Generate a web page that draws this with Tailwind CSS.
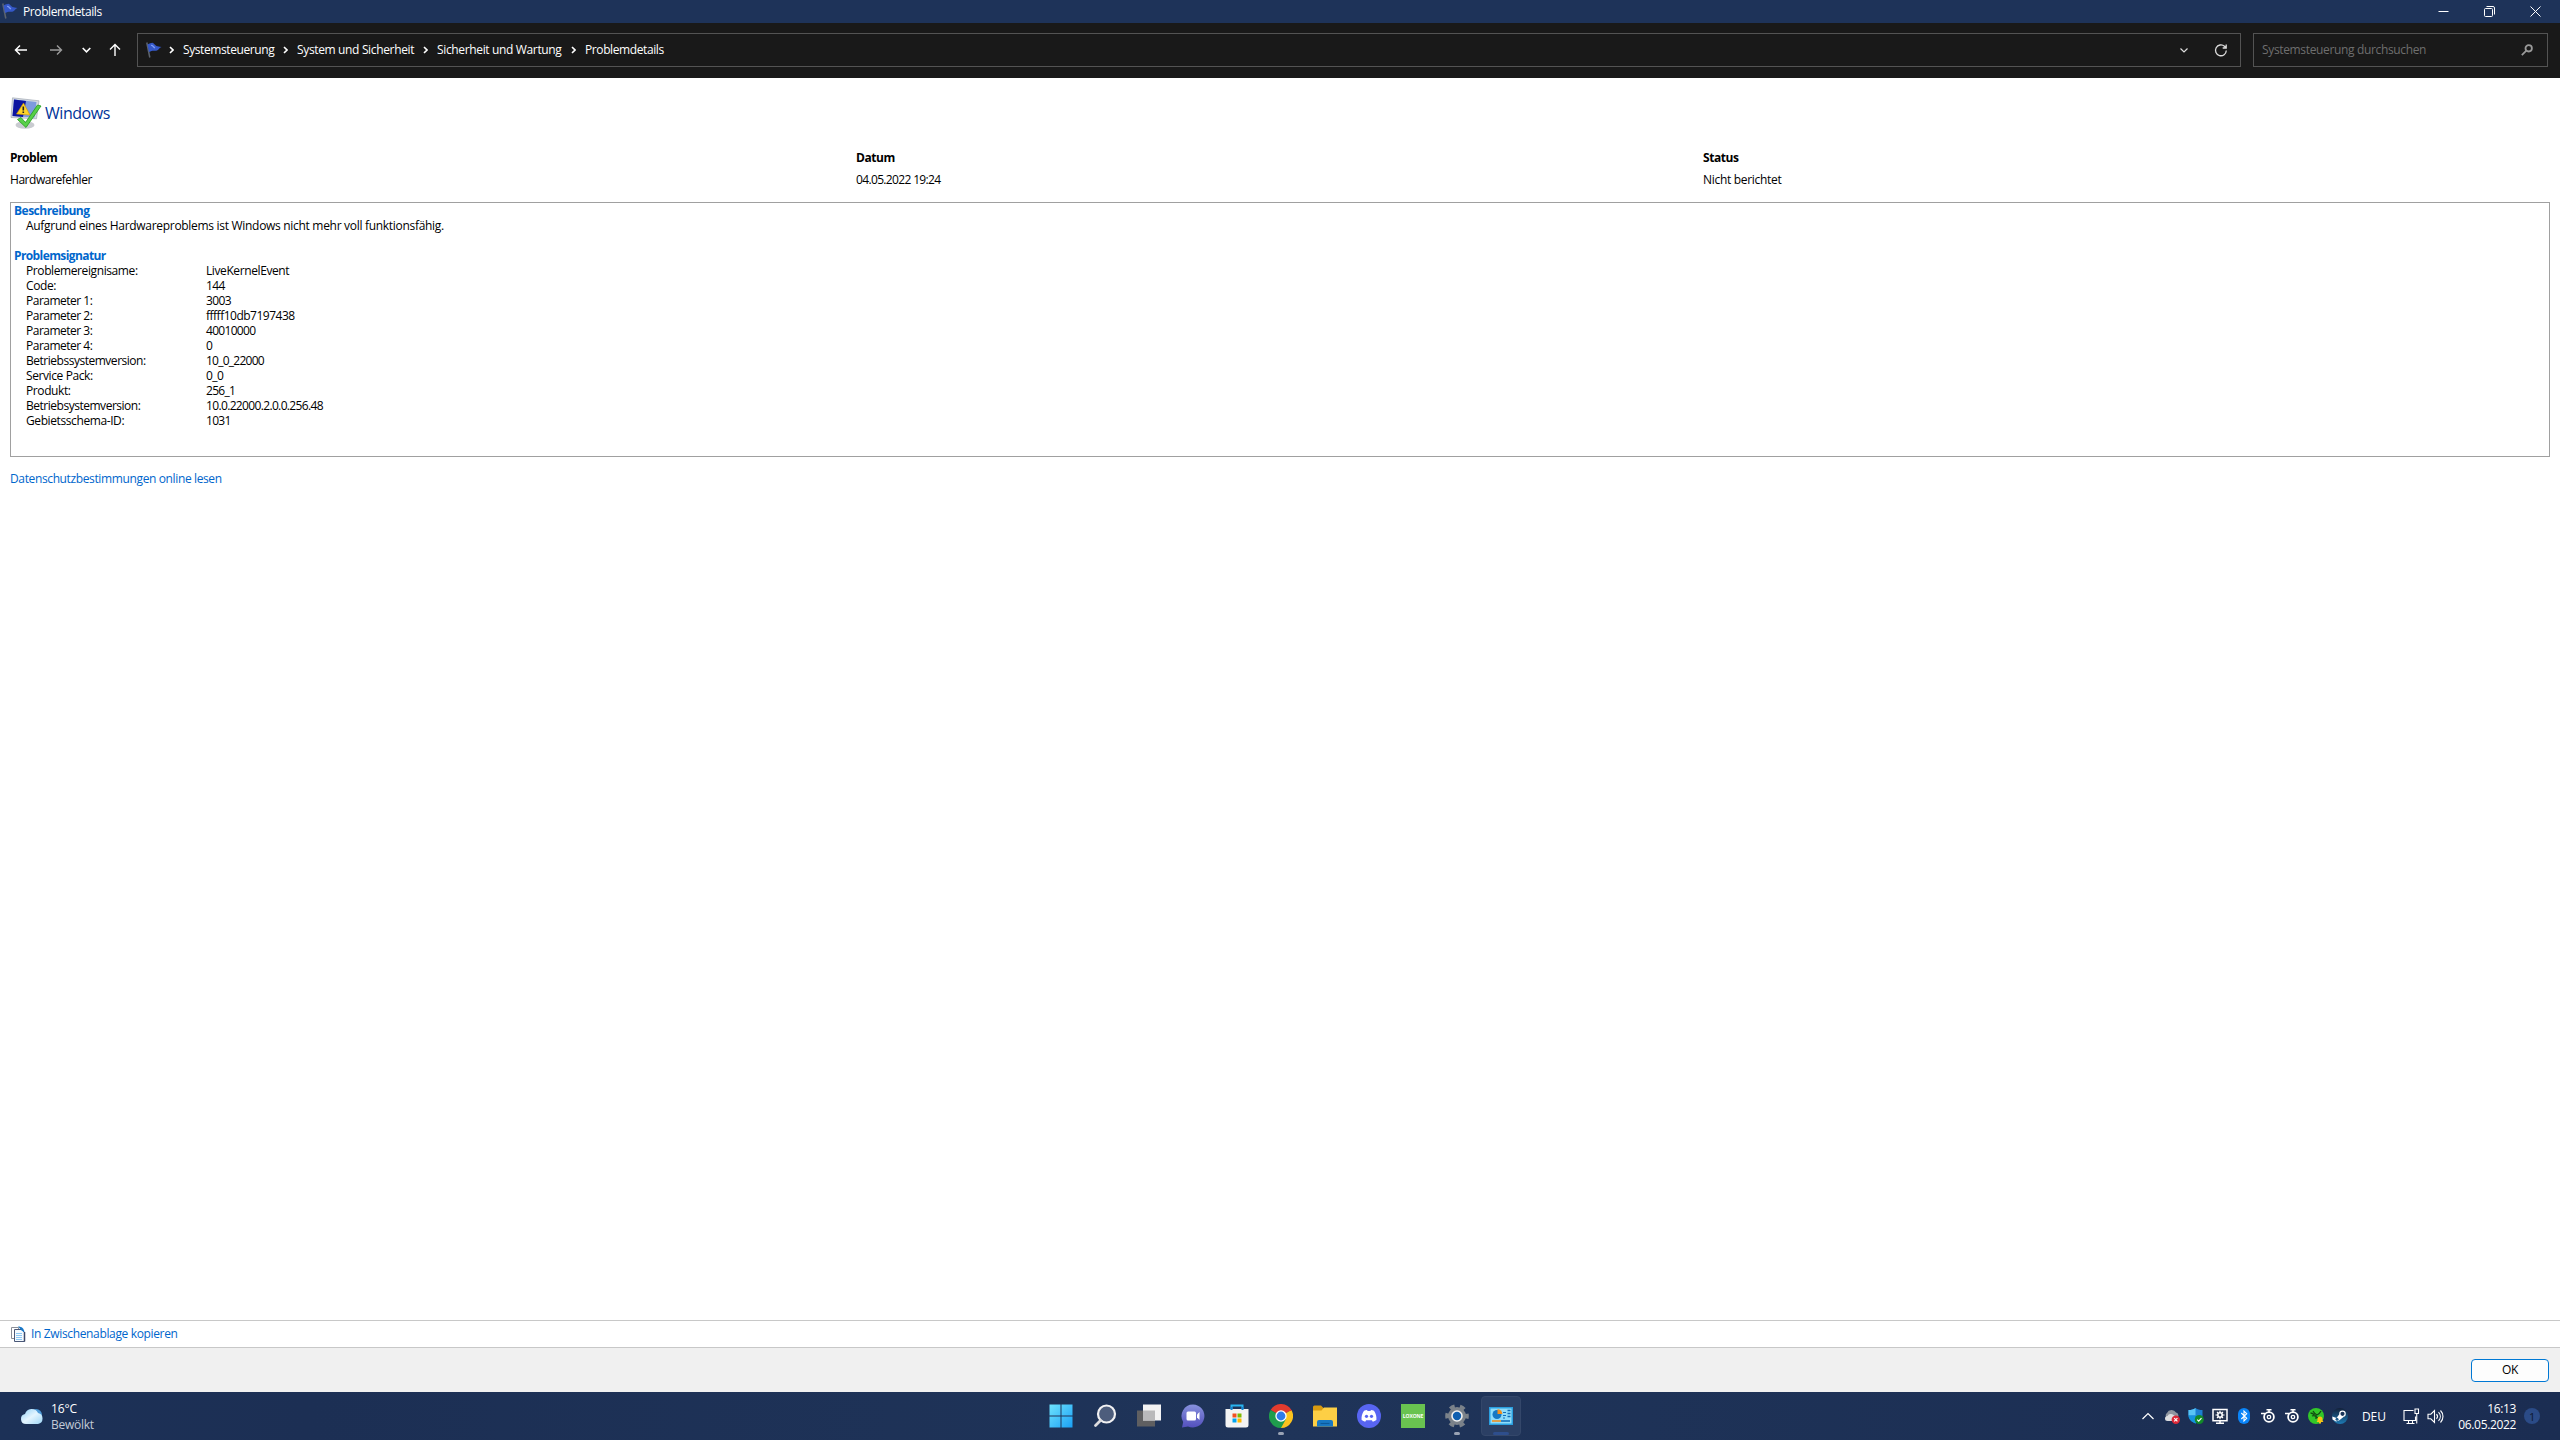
<!DOCTYPE html>
<html lang="de">
<head>
  <meta charset="UTF-8">
  <meta name="viewport" content="width=device-width, initial-scale=1.0">
  <title>Problemdetails</title>

  <!-- Tailwind CSS for styling -->
  <script src="https://cdn.jsdelivr.net/npm/@tailwindcss/browser@4"></script>
</head>
<body class="bg-white">

  <div class="flex h-[1440px] w-[2560px] flex-col overflow-hidden font-['Open_Sans','Noto_Sans',sans-serif] text-xs leading-[15px] tracking-[-0.4px] text-black">

    <!-- Title bar -->
    <header class="flex h-[23px] items-center bg-[#1e3359] pb-px text-white">
      <svg class="ml-0.5 size-4" viewBox="0 0 16 16">
        <path d="M.8.5l3 15" stroke="#5d646e" stroke-width="1.5" />
        <path d="M1.500 2.500C3.500 1 5 1.500 6.500.800c2 .6 2.500 2.700 4 3.200 1.500.6 2.500.5 5 1-2.500.8-2.500 2.500-4.500 3.500-2.500.8-4-.8-8 1.500z" fill="#3558c8" />
        <path d="M5 3.500c2-.5 2 1.500 4 2.500" fill="none" stroke="#7c9af5" stroke-width="1.200" />
      </svg>
      <span class="ml-[5px]">Problemdetails</span>
      <div class="ml-auto flex items-center gap-[35px] pr-[19px]">
        <svg class="size-[11px]" viewBox="0 0 11 11"><path d="M.5 5.500h10" stroke="#fff" /></svg>
        <svg class="size-[11px]" viewBox="0 0 11 11" fill="none" stroke="#fff">
          <rect x=".5" y="2.5" width="8" height="8" rx="1" />
          <path d="M2.5.5H9a1.5 1.5 0 0 1 1.5 1.5v6.500" />
        </svg>
        <svg class="size-[11px]" viewBox="0 0 11 11"><path d="M.5.5l10 10M10.500.5l-10 10" stroke="#fff" /></svg>
      </div>
    </header>

    <!-- Navigation -->
    <nav class="flex h-[55px] items-center bg-[#191919] pb-px text-white">
      <svg class="ml-[14px] size-[14px]" viewBox="0 0 14 14" fill="none" stroke="#fff" stroke-width="1.5"><path d="M13 7H1.500M6 2.500L1.500 7 6 11.500" /></svg>
      <svg class="ml-[21px] size-[14px]" viewBox="0 0 14 14" fill="none" stroke="#9a9a9a" stroke-width="1.4"><path d="M1 7h11.500M8 2.500L12.500 7 8 11.500" /></svg>
      <svg class="ml-[19px] h-[14px] w-[9px]" viewBox="0 0 9 14" fill="none" stroke="#fff" stroke-width="1.6"><path d="M.7 5l3.800 3.800L8.300 5" /></svg>
      <svg class="ml-[17px] size-[14px]" viewBox="0 0 14 14" fill="none" stroke="#fff" stroke-width="1.4"><path d="M7 13V1.500M2 6.500l5-5 5 5" /></svg>

      <div class="ml-[15px] flex h-[34px] w-[2104px] items-center border border-[#535353]">
        <svg class="ml-2 size-4" viewBox="0 0 16 16">
          <path d="M.8.5l3 15" stroke="#5d646e" stroke-width="1.5" />
          <path d="M1.500 2.500C3.500 1 5 1.500 6.500.800c2 .6 2.500 2.700 4 3.200 1.500.6 2.500.5 5 1-2.500.8-2.500 2.500-4.500 3.500-2.500.8-4-.8-8 1.500z" fill="#3558c8" />
          <path d="M5 3.500c2-.5 2 1.500 4 2.500" fill="none" stroke="#7c9af5" stroke-width="1.200" />
        </svg>
        <svg class="ml-[7px] h-2 w-[5px]" viewBox="0 0 5 8" fill="none" stroke="#fff" stroke-width="1.6"><path d="M1 1l3 3-3 3" /></svg>
        <span class="ml-[9px] w-[92px] pb-px">Systemsteuerung</span>
        <svg class="ml-2 h-2 w-[5px]" viewBox="0 0 5 8" fill="none" stroke="#fff" stroke-width="1.6"><path d="M1 1l3 3-3 3" /></svg>
        <span class="ml-[9px] w-[118px] pb-px tracking-[-0.35px]">System und Sicherheit</span>
        <svg class="ml-2 h-2 w-[5px]" viewBox="0 0 5 8" fill="none" stroke="#fff" stroke-width="1.6"><path d="M1 1l3 3-3 3" /></svg>
        <span class="ml-[9px] w-[126px] pb-px tracking-[-0.35px]">Sicherheit und Wartung</span>
        <svg class="ml-2 h-2 w-[5px]" viewBox="0 0 5 8" fill="none" stroke="#fff" stroke-width="1.6"><path d="M1 1l3 3-3 3" /></svg>
        <span class="ml-[9px] pb-px">Problemdetails</span>
        <svg class="ml-auto h-[14px] w-2" viewBox="0 0 8 14" fill="none" stroke="#ddd" stroke-width="1.2"><path d="M.5 5.500L4 9l3.500-3.500" /></svg>
        <svg class="ml-[26px] mr-[12px] size-[14px]" viewBox="0 0 14 14" fill="none" stroke="#ddd" stroke-width="1.3"><path d="M12.300 7.500A5.400 5.400 0 1 1 10.500 3.300L12 4.800M12.200 1.500v3.500H8.700" /></svg>
      </div>

      <div class="ml-3 flex h-[34px] w-[295px] items-center border border-[#535353] pl-2 text-[#6e6e6e]">
        <span class="pb-px tracking-[-0.35px]">Systemsteuerung durchsuchen</span>
        <svg class="ml-auto mr-[14px] size-3" viewBox="0 0 12 12" fill="none" stroke="#999" stroke-width="1.8"><circle cx="7.700" cy="4.300" r="3.200" /><path d="M5.300 6.700L.8 11.200" /></svg>
      </div>
    </nav>

    <main class="flex grow flex-col">
      <!-- Heading -->
      <div class="mt-[19px] flex items-center pl-[10px]">
        <svg class="size-8" viewBox="0 0 32 32">
          <ellipse cx="15" cy="28" rx="9.500" ry="3.800" fill="#c9cbd0" />
          <path d="M2.500.8l26.500 3-2.500 18L1 20.500z" fill="#d5dae2" stroke="#98a1ad" stroke-width=".6" />
          <path d="M4 2.500l22.500 2.600-2 15.400L2.500 19z" fill="#7d9bdf" />
          <path d="M4 2.500l12 1.400-3 16L2.500 19z" fill="#0c14a0" />
          <path d="M13.500 6l6.500 12-13.500-1z" fill="#ffd428" stroke="#c99500" stroke-width=".6" />
          <path d="M13.300 9.500v4M13.300 14.500V16" stroke="#222" stroke-width="1.600" />
          <path d="M7.500 22.500l3.500-2 4.500 5L27.500 8l3.500 1L16 30.500z" fill="#58d048" stroke="#229a1c" stroke-width=".8" />
        </svg>
        <h1 class="ml-[3px] text-base leading-5 tracking-[-0.45px] text-[#003399]">Windows</h1>
      </div>

      <div class="mt-[21px] grid grid-cols-[846px_847px_1fr] gap-y-[7px] pl-[10px]">
        <span class="font-bold tracking-[-0.45px]">Problem</span>
        <span class="font-bold tracking-[-0.45px]">Datum</span>
        <span class="font-bold tracking-[-0.45px]">Status</span>
        <span class="tracking-[-0.45px]">Hardwarefehler</span>
        <span class="tracking-[-0.65px]">04.05.2022 19:24</span>
        <span class="tracking-[-0.3px]">Nicht berichtet</span>
      </div>

      <!-- Report -->
      <section class="mx-[10px] mt-[15px] h-[255px] border border-[#a0a0a0] pl-[3px]">
        <h2 class="font-bold tracking-[-0.5px] text-[#0066cc]">Beschreibung</h2>
        <p class="pl-3 tracking-[-0.3px]">Aufgrund eines Hardwareproblems ist Windows nicht mehr voll funktionsfähig.</p>
        <h2 class="mt-[15px] font-bold tracking-[-0.6px] text-[#0066cc]">Problemsignatur</h2>
        <dl class="grid grid-cols-[180px_1fr] pl-3">
          <dt>Problemereignisame:</dt><dd>LiveKernelEvent</dd>
          <dt>Code:</dt><dd class="tracking-[-0.6px]">144</dd>
          <dt class="tracking-[-0.5px]">Parameter 1:</dt><dd class="tracking-[-0.6px]">3003</dd>
          <dt class="tracking-[-0.5px]">Parameter 2:</dt><dd class="tracking-[-0.5px]">fffff10db7197438</dd>
          <dt class="tracking-[-0.5px]">Parameter 3:</dt><dd class="tracking-[-0.7px]">40010000</dd>
          <dt class="tracking-[-0.5px]">Parameter 4:</dt><dd class="tracking-[-0.6px]">0</dd>
          <dt class="tracking-[-0.48px]">Betriebssystemversion:</dt><dd class="tracking-[-0.75px]">10_0_22000</dd>
          <dt>Service Pack:</dt><dd class="tracking-[-0.6px]">0_0</dd>
          <dt>Produkt:</dt><dd class="tracking-[-0.7px]">256_1</dd>
          <dt class="tracking-[-0.48px]">Betriebsystemversion:</dt><dd class="tracking-[-0.65px]">10.0.22000.2.0.0.256.48</dd>
          <dt>Gebietsschema-ID:</dt><dd class="tracking-[-0.7px]">1031</dd>
        </dl>
      </section>
      <a class="mt-[14px] pl-[10px] tracking-[-0.37px] text-[#0066cc]">Datenschutzbestimmungen online lesen</a>

      <div class="mt-auto flex h-[27px] items-center border-t border-[#c8c8c8] pl-[10px] text-[#0066cc]">
        <svg class="size-4" viewBox="0 0 16 16">
          <path d="M1.500 1.500h7v11h-7z" fill="#fff" stroke="#8b8f99" />
          <path d="M4.500 3.500h7l3 3v9h-10z" fill="#f4faff" stroke="#4a5878" />
          <path d="M8 .5c4 0 6 2 6.500 6l-3-2z" fill="#1878c8" />
          <path d="M6 7.500h6M6 9.500h6M6 11.500h6M6 13.500h6" stroke="#8cc8f4" />
          <path d="M14.500 6v9.500" stroke="#3c4868" stroke-width="1.500" />
        </svg>
        <span class="ml-[5px] pb-px tracking-[-0.35px]">In Zwischenablage kopieren</span>
      </div>
    </main>

    <!-- Dialog buttons -->
    <div class="flex h-[45px] shrink-0 items-center justify-end border-t border-[#c8c8c8] bg-[#f0f0f0] pr-[11px]">
      <button class="h-[23px] w-[78px] rounded border border-[#0078d4] bg-[#fdfdfd] pb-px">OK</button>
    </div>

    <!-- Taskbar -->
    <footer class="grid h-12 shrink-0 grid-cols-[1038px_1fr_1038px] items-center bg-[linear-gradient(90deg,#1c3157,#1c2f54_12%,#1f3459_50%,#1b2d52)] tracking-[-0.1px] text-white">
      <div class="flex items-center pl-5">
        <svg class="h-[18px] w-6" viewBox="0 0 24 18">
          <defs>
            <linearGradient id="cloud" x1="0" y1="0" x2="1" y2="1"><stop offset="0" stop-color="#8fd0f7" /><stop offset=".5" stop-color="#e4f5ff" /><stop offset="1" stop-color="#9dd5f5" /></linearGradient>
          </defs>
          <circle cx="16" cy="8" r="6" fill="#4f9bd8" />
          <path d="M6 17a5 5 0 0 1-1-9.900A7 7 0 0 1 18 6a5.600 5.600 0 0 1 0 11z" fill="url(#cloud)" />
        </svg>
        <div class="ml-[7px] pt-0.5 leading-4">
          <div>16°C</div>
          <div class="tracking-[-0.25px] text-[#c3cad6]">Bewölkt</div>
        </div>
      </div>

      <div class="flex items-center pl-px">
        <div class="flex h-10 w-11 items-center justify-center">
          <svg class="size-6" viewBox="0 0 24 24">
            <defs><linearGradient id="win" x1="0" y1="0" x2="1" y2="1"><stop offset="0" stop-color="#6fe3fd" /><stop offset="1" stop-color="#1aa0f5" /></linearGradient></defs>
            <path d="M.5.500h11v11H.5zM12.500.500h11v11h-11zM.5 12.500h11v11H.5zM12.500 12.500h11v11h-11z" fill="url(#win)" />
          </svg>
        </div>
        <div class="flex h-10 w-11 items-center justify-center">
          <svg class="size-6" viewBox="0 0 24 24"><circle cx="13.500" cy="10" r="8.500" fill="#4d5d7c" stroke="#f0f0f2" stroke-width="2.200" /><path d="M7.500 16.500l-5 5" stroke="#dcdcde" stroke-width="2.800" stroke-linecap="round" /></svg>
        </div>
        <div class="flex h-10 w-11 items-center justify-center">
          <svg class="size-6" viewBox="0 0 24 24"><path d="M0 6.500h18v16H0z" fill="#5f5f61" /><path d="M6 .5h18v16H6z" fill="#f3f3f4" /><path d="M6 6.500h12v10H6z" fill="#b9b9bb" /></svg>
        </div>
        <div class="flex h-10 w-11 items-center justify-center">
          <svg class="size-6" viewBox="0 0 24 24">
            <defs><linearGradient id="chat" x1="0" y1="0" x2="0" y2="1"><stop offset="0" stop-color="#8791dd" /><stop offset="1" stop-color="#5350bd" /></linearGradient></defs>
            <path d="M12 .5a11.500 11.500 0 1 1-5 21.900L1 23.500l1.200-5.500A11.500 11.500 0 0 1 12 .5z" fill="url(#chat)" />
            <rect x="5.500" y="7.500" width="9.500" height="9" rx="1.500" fill="#fff" /><path d="M16 10.500l2.500-2.500v8L16 13.500z" fill="#fff" />
          </svg>
        </div>
        <div class="flex h-10 w-11 items-center justify-center">
          <svg class="size-6" viewBox="0 0 24 24">
            <path d="M6.500 5V1.500h11V5" fill="none" stroke="#28b4f0" stroke-width="2" />
            <path d="M.5 5h23v16a2.500 2.500 0 0 1-2.500 2.500H3A2.500 2.500 0 0 1 .5 21z" fill="#f3f3f3" />
            <path d="M7.500 9.500h4v4h-4z" fill="#f25022" /><path d="M12.500 9.500h4v4h-4z" fill="#7fba00" /><path d="M7.500 14.500h4v4h-4z" fill="#00a4ef" /><path d="M12.500 14.500h4v4h-4z" fill="#ffb900" />
            <path d="M6.500 6V3M17.500 6V3" stroke="#1683d0" stroke-width="2" />
          </svg>
        </div>
        <div class="relative flex h-10 w-11 items-center justify-center">
          <svg class="size-6" viewBox="0 0 24 24">
            <path d="M12 12L1.600 6A12 12 0 0 1 22.400 6z" fill="#e33b2e" />
            <path d="M12 12L22.400 6A12 12 0 0 1 12 24z" fill="#fcc31e" />
            <path d="M12 12l5 3-5 9A12 12 0 0 1 1.600 6z" fill="#1f9d4d" />
            <path d="M12 6h10.400v1H12z" fill="#e33b2e" />
            <circle cx="12" cy="12" r="5.700" fill="#fff" /><circle cx="12" cy="12" r="4.400" fill="#2f7bea" />
          </svg>
          <span class="absolute bottom-[1px] h-[3px] w-1.5 rounded-full bg-[#9aa3b4]"></span>
        </div>
        <div class="flex h-10 w-11 items-center justify-center">
          <svg class="size-6" viewBox="0 0 24 24">
            <path d="M0 3a1.500 1.500 0 0 1 1.500-1.500H8l3 3V8H0z" fill="#d89a10" />
            <path d="M0 6.500h8.500l2.500-3h13v19H0z" fill="#fdcf45" />
            <path d="M4 22.500V18a2 2 0 0 1 2-2h12a2 2 0 0 1 2 2v4.500z" fill="#1878c4" /><path d="M7.500 19.500h9" stroke="#0c5a9c" stroke-width="1.200" />
          </svg>
        </div>
        <div class="flex h-10 w-11 items-center justify-center">
          <svg class="size-6" viewBox="0 0 24 24">
            <circle cx="12" cy="12" r="12" fill="#5865f2" />
            <path d="M7 6.800c1-.5 2-.8 3-.9l.6 1.100h2.800l.6-1.100c1 .1 2 .4 3 .9 2 2.900 2.700 6 2.400 9.200-1.200.9-2.400 1.400-3.600 1.700l-.9-1.500H9.100l-.9 1.500c-1.200-.3-2.400-.8-3.600-1.700C4.300 12.800 5 9.700 7 6.800z" fill="#fff" />
            <circle cx="9.500" cy="12.300" r="1.600" fill="#5865f2" /><circle cx="14.500" cy="12.300" r="1.600" fill="#5865f2" />
          </svg>
        </div>
        <div class="flex h-10 w-11 items-center justify-center">
          <div class="flex size-6 items-center justify-center bg-[#69c350] text-[5px] font-bold leading-none tracking-[-0.1px]">LOXONE</div>
        </div>
        <div class="relative flex h-10 w-11 items-center justify-center">
          <svg class="size-6" viewBox="0 0 24 24">
            <circle cx="12" cy="12" r="9" fill="#7b828a" />
            <circle cx="12" cy="12" r="9.800" fill="none" stroke="#7b828a" stroke-width="4" stroke-dasharray="5 5.263" stroke-dashoffset="2.500" />
            <circle cx="12" cy="12" r="5" fill="#0f5fb0" stroke="#f0f0f0" stroke-width="1.600" />
          </svg>
          <span class="absolute bottom-[1px] h-[3px] w-1.5 rounded-full bg-[#9aa3b4]"></span>
        </div>
        <div class="relative mx-0.5 flex size-10 items-center justify-center rounded border border-[#34476a] bg-[#2b3f64]">
          <svg class="size-6" viewBox="0 0 24 24">
            <path d="M0 3h24v18H0z" fill="#2a9fe0" /><path d="M1.500 4.500h21v15h-21z" fill="#8fdcfa" />
            <circle cx="8" cy="10.500" r="4.500" fill="#1578c4" /><path d="M8.500 10V5.200a4.800 4.800 0 0 1 4.800 4.800z" fill="#f09020" />
            <path d="M14 8.500h3M14 11.500h3M14 14h2" stroke="#1470b8" /><path d="M18.500 6.500h3M18.500 9.500h3M18.500 12.500h3" stroke="#1470b8" stroke-width="1.500" />
            <path d="M3 17h9" stroke="#f09020" stroke-width="1.600" /><path d="M12 17h9" stroke="#1470b8" stroke-width="1.600" />
          </svg>
          <span class="absolute bottom-0 h-[3px] w-4 rounded-full bg-[#2e4e8c]"></span>
        </div>
      </div>

      <!-- Tray -->
      <div class="flex items-center justify-end pr-[21px]">
        <div class="flex items-center gap-2">
          <svg class="size-4" viewBox="0 0 16 16" fill="none" stroke="#fff" stroke-width="1.200"><path d="M2.500 11L8 5.500l5.500 5.500" /></svg>
          <svg class="size-4" viewBox="0 0 16 16">
            <path d="M3 10a3 3 0 0 1 0-5A5 5 0 0 1 12 4.500 3 3 0 0 1 13 10z" fill="#8f959f" /><path d="M3.500 13a2.500 2.500 0 0 1 0-5 4 4 0 0 1 6-1l3 2v4z" fill="#dcdde0" />
            <circle cx="11.800" cy="11.800" r="4.200" fill="#dc2838" /><path d="M10.200 10.200l3.200 3.200M13.400 10.200l-3.200 3.200" stroke="#fff" stroke-width="1.200" />
          </svg>
          <svg class="size-4" viewBox="0 0 16 16">
            <path d="M7.500 0c2 1.500 4 2 7 2v5c0 4-3 7-7 8.500C3.500 14 .5 11 .5 7V2c3 0 5-.5 7-2z" fill="#1c7fd0" /><path d="M7.500 0v7.500h-7V2c3 0 5-.5 7-2z" fill="#58c4f4" /><path d="M7.500 7.500v8C3.500 14 .5 11 .5 7.500z" fill="#1494dc" />
            <circle cx="11.300" cy="11.500" r="4.500" fill="#128a28" /><path d="M9.200 11.600l1.500 1.500 2.800-3" fill="none" stroke="#fff" stroke-width="1.200" />
          </svg>
          <svg class="size-4" viewBox="0 0 16 16" fill="none" stroke="#fff">
            <path d="M1 1.500h14v11.300H1z" fill="#26344f" stroke-width="1.500" /><path d="M4 15.200h8M8 13v2" stroke-width="1.500" /><circle cx="8" cy="7" r="2.200" stroke-width="1.600" /><path d="M8 2.800v1.700M8 9.500v1.700M3.500 7h2M10.500 7h2M5 4l1.200 1.200M11 4L9.800 5.200M5 10l1.200-1.200M11 10L9.800 8.800" stroke-width="1.200" />
          </svg>
          <svg class="size-4" viewBox="0 0 16 16"><rect x="2" width="12" height="16" rx="6" fill="#0a84f8" /><path d="M5.300 5l5.400 5.300L8 13V3l2.700 2.700L5.300 11" fill="none" stroke="#fff" stroke-width="1.100" /></svg>
          <svg class="size-4" viewBox="0 0 16 16" fill="none" stroke="#fff"><circle cx="9" cy="9" r="4.900" stroke-width="1.800" /><circle cx="9" cy="9" r="1.700" stroke-width="1.300" /><path d="M1 5.500h4M6.500 1.700h5M9 2v2" stroke-width="1.500" /></svg>
          <svg class="size-4" viewBox="0 0 16 16" fill="none" stroke="#fff"><circle cx="9" cy="9" r="4.900" stroke-width="1.800" /><circle cx="9" cy="9" r="1.700" stroke-width="1.300" /><path d="M1 5.500h4M6.500 1.700h5M9 2v2" stroke-width="1.500" /></svg>
          <svg class="size-4" viewBox="0 0 16 16">
            <circle cx="8" cy="8" r="8" fill="#32c828" /><path d="M2.500 5c2 0 3 1 4 2M5 3c1 2 2 3 4 4M13 3c-1 2-2 3-4 4M4 8c2-1 4 0 6 2M8 7v4" fill="none" stroke="#124c12" stroke-width="1.300" />
            <path d="M8.500 14c1-1 1-1.500 1-3a2.500 2.500 0 0 1 5 0c0 1.500 0 2 1 3zM11 14h2v1.500h-2z" fill="#f8c414" />
          </svg>
          <svg class="size-4" viewBox="0 0 16 16">
            <defs><linearGradient id="steam" x1="0" y1="0" x2="0" y2="1"><stop offset="0" stop-color="#132039" /><stop offset="1" stop-color="#1d7ab4" /></linearGradient></defs>
            <circle cx="8" cy="8" r="8" fill="url(#steam)" /><path d="M.3 8.500l4.200 1.500L7.500 6l4 3-4.500 3.500-3 1L.5 11.500z" fill="#fff" />
            <circle cx="10.500" cy="5.800" r="2.700" fill="#1a3558" stroke="#fff" stroke-width="1.200" /><circle cx="5" cy="11.200" r="1.500" fill="#1d5b8c" />
          </svg>
        </div>
        <span class="ml-[14px] w-[23px]">DEU</span>
        <svg class="ml-[18px] size-[17px]" viewBox="0 0 17 17" fill="none" stroke="#fff" stroke-width="1.100"><path d="M10.500 2.500H1v10h11.500V8.500M3.500 15.500h8M5.500 12.500v3M9.500 12.500v3M12 1h3.500v4.500H12zM13.750 5.500v10" /></svg>
        <svg class="ml-[7px] size-[17px]" viewBox="0 0 17 17" fill="none" stroke="#fff" stroke-width="1.100"><path d="M1 6.200h2.800L7.500 2.500v12L3.800 10.800H1zM9.500 6.200c1.200 1.300 1.200 3.300 0 4.600M11.500 4.200c2.400 2.500 2.400 6.100 0 8.600M13.500 2.500c3.300 3.500 3.300 8.500 0 12" /></svg>
        <div class="ml-[14px] w-[58px] pt-px text-right leading-4 tracking-[-0.35px]">
          <div>16:13</div>
          <div>06.05.2022</div>
        </div>
        <span class="ml-2 flex size-4 items-center justify-center rounded-full bg-[#2b4b87] text-[11px] text-[#0d1830]">1</span>
      </div>
    </footer>
  </div>

</body>
</html>
